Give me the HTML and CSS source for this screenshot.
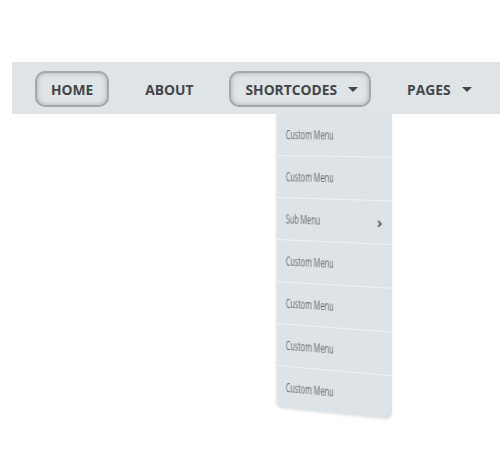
FILE: index.html
```html
<!DOCTYPE html>
<html lang="en">
<head>
    <meta charset="UTF-8">
    <meta name="viewport" content="width=device-width, initial-scale=1.0">
    <title>Menu</title>
    <link rel="stylesheet" href="styles.css">
</head>
<body>
    <nav class="menu">
        <ul class="menu-list">
            <li class="menu-item"><a class="pill active" href="#">HOME</a></li>
            <li class="menu-item"><a class="pill" href="#">ABOUT</a></li>
            <li class="menu-item"><a class="pill active" href="#">SHORTCODES <span class="caret"></span></a></li>
            <li class="menu-item"><a class="pill" href="#">PAGES <span class="caret"></span></a></li>
        </ul>
    </nav>
    <!-- submenu of SHORTCODES -->
    <ul class="dropdown">
        <li><a href="#"><span class="label">Custom Menu</span></a></li>
        <li><a href="#"><span class="label">Custom Menu</span></a></li>
        <li><a href="#"><span class="label">Sub Menu</span><span class="more">&rsaquo;</span></a></li>
        <li><a href="#"><span class="label">Custom Menu</span></a></li>
        <li><a href="#"><span class="label">Custom Menu</span></a></li>
        <li><a href="#"><span class="label">Custom Menu</span></a></li>
        <li><a href="#"><span class="label">Custom Menu</span></a></li>
    </ul>
</body>
</html>
```

FILE: styles.css
```css
body {
    font-family: "Open Sans", Arial, sans-serif;
    margin: 0;
    padding: 62px 0 0 12px;
    min-height: 100vh;
    box-sizing: border-box;
    background: #fff;
}
.menu {
    position: relative;
    z-index: 1;
    background-color: #dfe4e7;
    height: 52px;
    width: 488px;
}
.menu-list {
    list-style: none;
    margin: 0;
    padding: 9px 0 0 23px;
    display: flex;
    gap: 20px;
}
.pill {
    display: flex;
    align-items: center;
    height: 36px;
    box-sizing: border-box;
    padding: 0 14px;
    border: 2px solid transparent;
    border-radius: 10px;
    color: #43474a;
    font-size: 13.8px;
    font-weight: 700;
    text-decoration: none;
    white-space: nowrap;
}
.pill.active {
    border-color: #a3a7a9;
    box-shadow: inset 0 0 5px rgba(0, 0, 0, 0.25);
}
.caret {
    display: inline-block;
    margin: 0 -3px 0 11px;
    width: 0;
    height: 0;
    border-left: 5px solid transparent;
    border-right: 5px solid transparent;
    border-top: 5px solid #43474a;
}
/* swung open on its left edge */
.dropdown {
    width: 113px;
    list-style: none;
    margin: 0 0 0 265px;
    padding: 0;
    background-color: #dde3e6;
    border-radius: 0 0 6px 6px;
    box-shadow: -1px 1px 3px rgba(0, 0, 0, 0.12);
    transform-origin: 0 0;
    transform: perspective(600px) rotateY(-12deg);
}
.dropdown li + li {
    border-top: 1px solid #eef1f3;
}
.dropdown a {
    display: flex;
    align-items: center;
    justify-content: space-between;
    height: 41px;
    padding: 0 9px 2px 9px;
    box-sizing: border-box;
    color: #62676a;
    font-size: 13px;
    text-decoration: none;
}
.dropdown .label {
    display: inline-block;
    transform-origin: 0 50%;
    transform: scaleX(0.56);
    white-space: nowrap;
}
.dropdown .more {
    font-size: 15px;
    font-weight: 700;
    color: #5b6063;
}
```
